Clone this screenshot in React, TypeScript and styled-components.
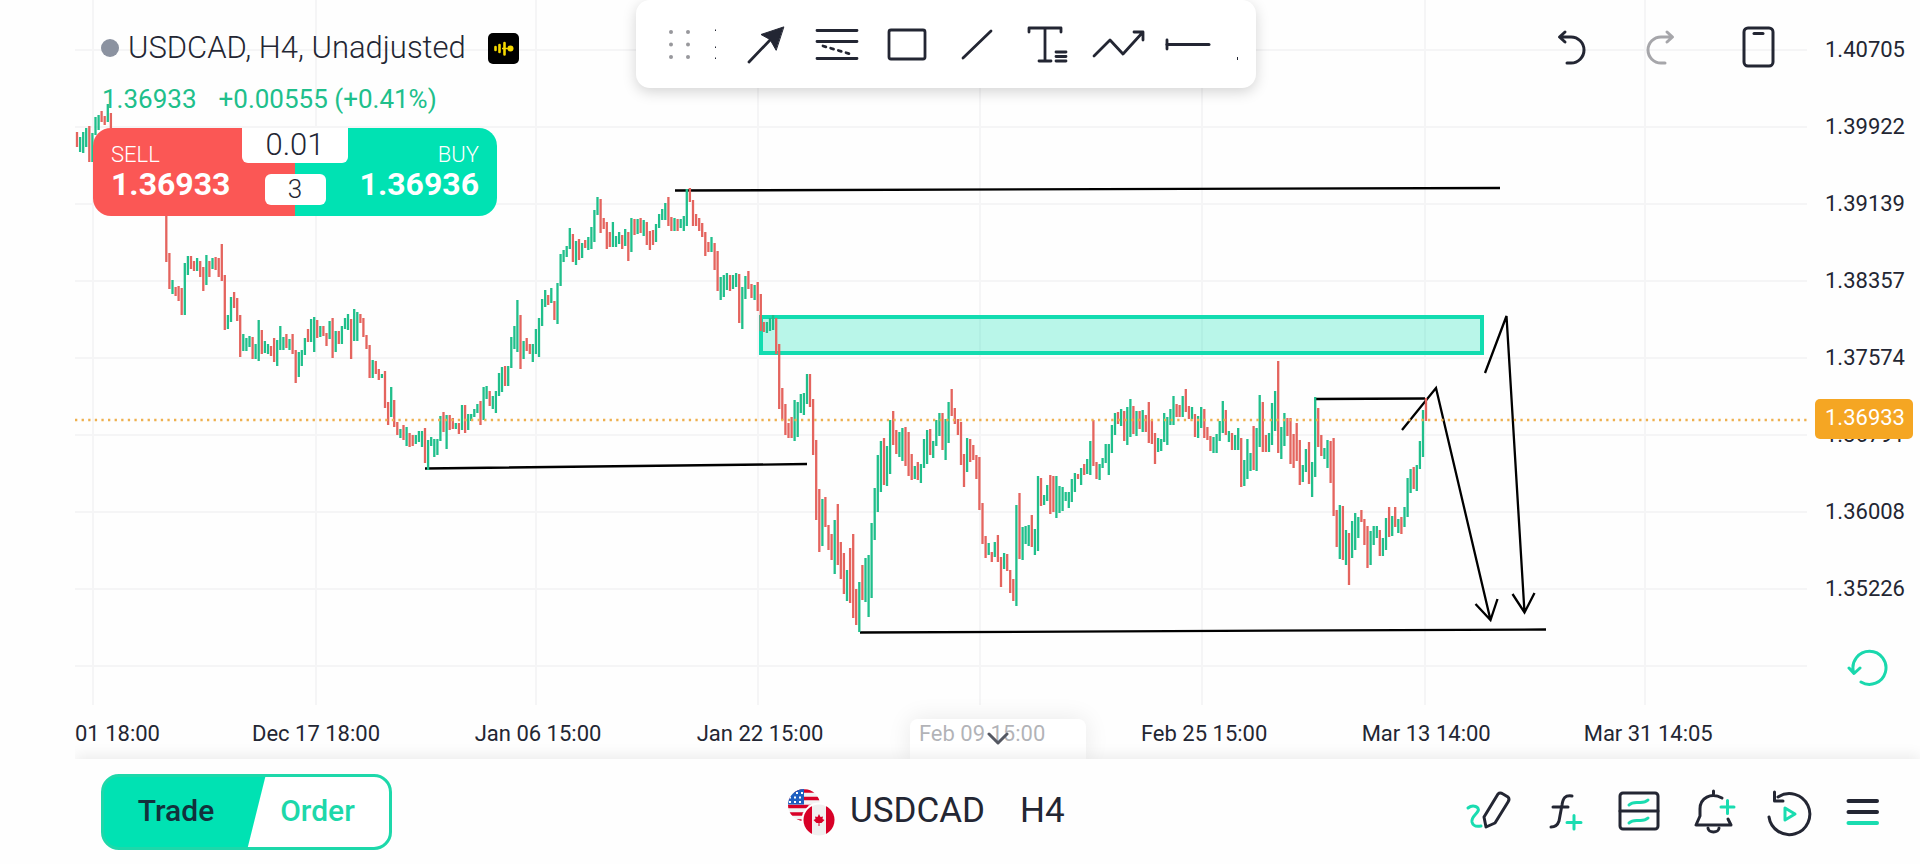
import React from "react";
import styled, { createGlobalStyle } from "styled-components";

const ink = "#232633";
const teal = "#00e2b3";
const up = "#20bf8b";
const down = "#e4645e";

const GlobalStyle = createGlobalStyle`
  *, *::before, *::after { box-sizing: border-box; }
  body { margin: 0; background: #fefefe; color: ${ink}; font-family: Roboto, "Liberation Sans", sans-serif; }
  button, input { font: inherit; color: inherit; border: 0; padding: 0; background: none; }
  button { cursor: pointer; }
  ul { list-style: none; margin: 0; padding: 0; }
`;

/* Each candle is a direction (u = up, d = down) with its top and bottom; "-" is a bar without data. */
const series = `
d132-147 u137-152 u132-153 u128-147 d126-162 u133-162 u117-135 u115-130 d111-122 d116-125 u104-122 d113-128
- - - - - - - - - - - - - - - - -
d205-262 d253-289 u280-294 d287-296 d286-301 d288-315 u263-315 u256-275 d256-269 d261-271
u258-271 d261-277 d267-291 u255-285 d261-277 u258-269 d257-270 d258-277 d244-281 d275-330
u315-329 u297-322 d292-308 d298-321 d315-357 u334-351 u338-351 u336-347 d337-359 u344-359
u320-361 d330-354 u341-353 u344-354 d346-356 d338-362 u340-366 u326-350 u337-350 d334-348
u339-350 d334-354 d350-383 u352-377 u350-366 u338-355 d329-342 u319-342 u317-352 d320-338
u326-337 d326-336 d333-346 u321-339 d318-358 u331-352 d331-344 u326-344 u318-329 u314-330
d319-359 u309-341 u312-341 d314-323 d318-337 d335-349 d345-378 u360-378 d361-374 d369-380
u374-378 d371-408 d402-425 u387-417 d400-427 d422-435 u429-438 d425-440 u427-446 d433-447
d435-446 u435-444 u431-442 u431-447 d428-463 u440-470 u437-446 u439-457 u439-455 u416-441
d412-432 u415-449 d415-430 d418-429 u423-429 d423-434 u405-430 d405-433 u414-430 u414-421
u409-417 u404-413 d401-425 u387-420 u386-399 d391-406 u396-409 u391-413 u373-396 u367-392
d366-386 u366-386 u337-368 u326-349 u300-352 d315-369 u341-359 d338-351 d344-354 u344-362
u329-354 u318-357 u299-326 u290-307 d295-305 u288-303 d301-320 u283-324 u254-286 u250-262
u246-257 u228-249 d234-262 u241-265 d239-260 u243-258 d240-248 u237-250 u227-249 u210-242
u197-215 d199-233 d218-229 d222-249 d232-247 u222-247 u236-247 u232-244 d235-249 u229-246
d232-261 u218-252 d219-235 u219-234 d218-233 u220-236 d222-245 d231-250 d230-245 u224-242
u214-228 u209-220 u203-220 d197-226 d217-231 u218-231 d219-231 u219-228 u216-231 u189-226
d188-202 d200-226 d214-226 d218-231 d223-237 d232-256 d242-252 u237-252 d243-270 d251-291
u277-300 u275-297 u273-290 d275-291 u275-289 u273-287 d274-323 u287-329 u276-299 d271-289
d284-298 u285-300 d282-311 d294-331 d322-332 u322-333 u318-331 u315-330 d318-354 d344-409
d388-420 d404-435 d423-438 d417-438 u400-441 u402-437 u394-413 u393-415 u374-404 d374-407
d399-455 d440-520 d489-552 u499-546 d497-527 d525-550 d534-560 u520-574 d504-565 d542-579
d553-594 u570-601 d548-603 d534-618 d589-625 u582-632 d565-600 u558-602 u555-617 u523-598
u488-540 u455-512 u441-492 d438-485 u446-486 u420-474 d411-445 d430-454 u432-457 u428-461
d427-466 d432-476 d454-480 u466-479 d462-480 u464-483 u439-468 u430-464 d429-455 u441-458
u420-446 u413-436 d413-450 u419-460 u402-443 d389-416 d408-424 d419-435 d422-465 d454-487
u438-472 d439-462 d445-460 d455-479 d457-510 d503-544 d536-558 u543-555 d552-562 u542-557
d535-562 d557-587 u553-569 d554-571 d570-593 d579-601 u505-606 d493-559 u527-560 u526-544
u525-546 d515-547 u529-555 u476-551 d478-506 u495-505 u485-501 d475-514 d476-512 u476-518
u486-513 u487-511 u492-501 u492-508 u479-502 u473-492 d474-479 u468-485 d464-475 u459-474
u441-475 d420-466 d462-479 u464-480 u458-468 u444-463 u444-475 u425-453 u413-435 d412-424
u409-426 d411-441 u407-445 u399-437 d406-434 u411-436 d411-429 u410-432 d415-432 d402-443
d420-444 d433-464 u438-452 u439-451 u413-442 u417-445 u409-425 u396-425 d404-417 d405-417
u396-417 d389-412 d406-419 u407-419 d414-437 u416-438 u407-428 d409-438 d427-440 d436-451
u437-453 u434-453 u421-441 u401-433 d410-435 u431-442 d433-450 u435-450 u428-450 d438-487
u460-486 u439-479 u453-471 d426-470 u428-471 u395-447 d402-452 d435-452 u433-452 u403-445
u391-431 d361-453 u427-459 u413-446 d418-436 d418-464 d434-468 d423-461 d440-485 u465-482
u449-472 d442-484 u462-497 u397-477 d408-447 d435-456 u448-459 u440-468 d441-483 d438-516
d510-547 u505-559 d506-560 u530-565 d533-585 u521-558 u513-550 u517-538 d510-522 d519-545
d526-568 u531-565 u526-545 u526-538 d530-556 u538-556 u518-550 d507-537 u516-536 d507-527
u519-533 d517-534 u507-527 u478-517 u469-493 d467-489 u465-491 u441-469 u410-457 d398-421
`.trim().split(/\s+/);

const BAR_STEP = 3.08;

const candlePath = (kind: string) =>
  series
    .map((bar, i) => {
      if (bar[0] !== kind) return "";
      const [top, bottom] = bar.slice(1).split("-");
      return `M${(2 + i * BAR_STEP).toFixed(1)} ${top}V${bottom}`;
    })
    .join("");

const gridX = [18, 241, 461, 683, 905, 1127, 1350, 1570];
const gridY = [50, 127, 204, 281, 358, 435, 512, 589, 666];
const prices = ["1.40705", "1.39922", "1.39139", "1.38357", "1.37574", "1.36791", "1.36008", "1.35226"];
const times = ["01 18:00", "Dec 17 18:00", "Jan 06 15:00", "Jan 22 15:00", "Feb 09 15:00", "Feb 25 15:00", "Mar 13 14:00", "Mar 31 14:05"];

const Screen = styled.div`
  height: 100vh;
  min-height: 560px;
  display: flex;
  flex-direction: column;
  overflow: hidden;
`;
const Stage = styled.main`
  position: relative;
  flex: 1;
  min-height: 0;
  display: grid;
  grid-template-columns: minmax(0, 1fr) 113px;
  grid-template-rows: minmax(0, 1fr) 54px;
  margin-left: 75px;
`;
const Plot = styled.svg`
  display: block;
  width: 100%;
  height: 100%;
`;
const PriceAxis = styled.aside`
  position: relative;
  display: grid;
`;
const PriceList = styled.ul`
  display: grid;
  grid-template-rows: 11fr repeat(9, 77fr) 1fr;
  &::before { content: ""; }
`;
const PriceLabel = styled.li`
  display: flex;
  align-items: center;
  padding-left: 18px;
  font-size: 22px;
  line-height: 24px;
`;
const ResetButton = styled.button`
  display: grid;
  place-items: center;
  width: 64px;
  height: 100%;
  margin-left: 30px;
`;
const ResetCell = styled.li`
  display: flex;
`;
const CurrentPrice = styled.output`
  position: absolute;
  top: 59.5%;
  left: 8px;
  width: 98px;
  height: 40px;
  transform: translateY(-50%);
  border-radius: 5px;
  background: #f5a623;
  color: #fff;
  font-size: 22px;
  line-height: 38px;
  padding-left: 10px;
`;
const TimeAxis = styled.ul`
  display: flex;
  padding-top: 16px;
  font-size: 22px;
  line-height: 26px;
  white-space: nowrap;
`;
const TimeLabel = styled.li`
  flex: 0 0 12.82%;
  text-align: center;
  &:first-child { flex-basis: 130px; text-align: left; }
`;
const CollapseTab = styled.button`
  position: absolute;
  left: 50%;
  bottom: 0;
  width: 176px;
  height: 40px;
  transform: translateX(-50%);
  display: grid;
  place-items: center;
  border-radius: 8px 8px 0 0;
  background: rgba(255, 255, 255, 0.65);
  box-shadow: 0 0 24px rgba(0, 0, 0, 0.09);
`;

const Overlay = styled.header`
  position: absolute;
  inset: 0 0 auto 0;
  display: grid;
  grid-template-columns: 561px 620px minmax(0, 1fr);
  align-items: start;
`;
const Summary = styled.section`
  padding: 28px 0 0 18px;
`;
const TitleRow = styled.div`
  display: flex;
  align-items: center;
  height: 40px;
  padding-left: 8px;
`;
const Dot = styled.span`
  width: 18px;
  height: 18px;
  border-radius: 50%;
  background: #8b92a0;
`;
const Title = styled.h1`
  margin: 0 22px 0 9px;
  font-size: 31px;
  line-height: 40px;
  font-weight: 300;
  white-space: nowrap;
`;
const Quote = styled.p`
  display: flex;
  gap: 22px;
  margin: 14px 0 0;
  padding-left: 9px;
  font-size: 26px;
  line-height: 34px;
  height: 46px;
  color: ${up};
`;
const Ticket = styled.div`
  position: relative;
  display: flex;
  width: 404px;
  height: 88px;
  border-radius: 18px;
  overflow: hidden;
  color: #fff;
`;
const Side = styled.button<{ $buy?: boolean }>`
  flex: 1;
  display: flex;
  flex-direction: column;
  justify-content: center;
  padding: 0 18px 2px;
  align-items: ${(p) => (p.$buy ? "flex-end" : "flex-start")};
  background: ${(p) => (p.$buy ? teal : "#fb5755")};
`;
const SideName = styled.span`
  font-size: 22px;
  line-height: 26px;
  font-weight: 300;
`;
const SidePrice = styled.strong`
  font-size: 32px;
  line-height: 32px;
  font-weight: 700;
`;
const TicketCenter = styled.div`
  position: absolute;
  inset: 0 149px;
  display: flex;
  flex-direction: column;
  align-items: center;
  gap: 11px;
  color: ${ink};
  font-weight: 300;
`;
const Volume = styled.input`
  width: 106px;
  height: 35px;
  border-radius: 0 0 6px 6px;
  background: #fff;
  text-align: center;
  font-size: 31px;
  line-height: 32px;
  padding-bottom: 2px;
`;
const Spread = styled.output`
  width: 61px;
  height: 31px;
  border-radius: 6px;
  background: #fff;
  text-align: center;
  font-size: 26px;
  line-height: 30px;
`;

const Toolbar = styled.div`
  display: flex;
  height: 88px;
  border-radius: 14px;
  background: #fff;
  box-shadow: 0 4px 14px rgba(0, 0, 0, 0.17);
`;
const Grip = styled.svg`
  flex: 0 0 95px;
`;
const Tool = styled.button`
  flex: 0 0 70px;
  height: 88px;
`;
const Actions = styled.div`
  display: flex;
  justify-content: flex-end;
  gap: 48px;
  padding: 24px 140px 0 0;
`;
const IconButton = styled.button`
  width: 44px;
  height: 48px;
`;
const Icon = styled.svg`
  display: block;
  fill: none;
  stroke: currentColor;
  stroke-width: 3;
  stroke-linecap: round;
  stroke-linejoin: round;
`;
const ToolIcon = styled(Icon)`
  stroke-width: 2.8;
`;

const BottomBar = styled.footer`
  position: relative;
  display: flex;
  align-items: center;
  height: 105px;
  margin-left: 75px;
  padding: 0 19px 0 26px;
  background: #fefefe;
  box-shadow: 0 -3px 14px rgba(0, 0, 0, 0.08);
  clip-path: inset(-24px 0 0 0);
`;
const Segments = styled.div`
  display: flex;
  width: 291px;
  height: 76px;
  border: 3px solid #1dd8aa;
  border-radius: 18px;
  overflow: hidden;
  font-size: 30px;
  font-weight: 500;
  background: linear-gradient(104deg, ${teal} 0 156px, #fff 157px);
`;
const Segment = styled.button<{ $active?: boolean }>`
  flex: ${(p) => (p.$active ? "0 0 144px" : "1")};
  text-align: center;
  padding: ${(p) => (p.$active ? "0 0 2px" : "0 2px 2px 0")};
  color: ${(p) => (p.$active ? "#12313c" : "#1dd8aa")};
`;
const Instrument = styled.div`
  display: flex;
  align-items: center;
  flex: 1;
  padding-left: 395px;
  font-size: 35px;
  line-height: 40px;
`;
const SymbolButton = styled.button`
  display: flex;
  align-items: center;
  gap: 13px;
`;
const SymbolName = styled.span`
  padding-bottom: 2px;
`;
const Period = styled.button`
  margin-left: 35px;
  padding-bottom: 2px;
`;
const Nav = styled.nav`
  display: flex;
`;
const NavButton = styled.button`
  width: 75px;
  height: 105px;
`;

const tools: [string, React.ReactNode][] = [
  ["Arrow", <><path d="M18 62 40 39" /><path d="M52.500 27 30 34.500 39 39.500 45 50Z" fill="currentColor" strokeWidth="1" /></>],
  ["Fibonacci", <><path d="M16 30.500H56M16 41.500H56M16 58.500H56" /><path d="M22 46 51 54.500" strokeDasharray="3 5" /></>],
  ["Rectangle", <rect x="18" y="30" width="36" height="29" rx="2" />],
  ["Trend line", <path d="M22 58 50 31" />],
  ["Text", <path d="M18 32V28H50V32M34 28V61M28 61H40M45 52H55M45 56.500H55M45 61H55" />],
  ["Path", <path d="M13 56 29 40 42 54 62 32M53 32H62V40" />],
  ["Horizontal ray", <><path d="M16 40V49" /><path d="M16 44.500H58" strokeWidth="3" /></>],
];

const navItems: [string, React.ReactNode][] = [
  ["Draw", <><path d="M17 49C22 45 29 48 27 52C25 56 20 58 21 63C22 67 25 68 30 67" stroke="#19dcb0" /><path d="M35 68 33 58 47 35Q49 33 52 35L57 38Q59 40 57 43L44 64Z" /></>],
  ["Indicators", <><path d="M46 37C39 36 37 39 36 46L33 62Q31 68 25 68M27 48H42" /><path d="M48 56.500V70M41 63.500H55" stroke="#19dcb0" /></>],
  ["Layout", <><rect x="19" y="34" width="38" height="36" rx="3" /><path d="M19 52H57" /><path d="M28 46C34 40 41 47 47 41M28 64C34 58 41 65 47 59" stroke="#19dcb0" /></>],
  ["Add alert", <><path d="M46 39C35 33 24 39 24 50V57L20 66H55L52 60M37.500 32V35" /><path d="M32 69A5.500 4 0 0 0 43 69" /><path d="M51.500 41.500V54.500M45 48H58" stroke="#19dcb0" /></>],
  ["Replay", <><path d="M27 38A20.500 20.500 0 1 1 18 58M23.500 33V42H32" /><path d="M34 49V61L44 55Z" stroke="#19dcb0" /></>],
  ["Menu", <><path d="M22.500 42H51M22.500 53H51" strokeWidth="4" /><path d="M22.500 64H51" stroke="#19dcb0" strokeWidth="4" /></>],
];

const BrokerLogo = () => (
  <svg width="31" height="31" viewBox="0 0 31 31" role="img" aria-label="Data source">
    <rect width="31" height="31" rx="5" fill="#000" />
    <path d="M7.500 14V17M11.500 12V19M16.500 10V21.500" stroke="#f5d800" strokeWidth="2.600" strokeLinecap="round" />
    <path d="M14 15.500H22" stroke="#f5d800" strokeWidth="1.500" />
    <circle cx="22.500" cy="15.500" r="3" fill="#f5d800" />
  </svg>
);

const Flags = () => (
  <svg width="50" height="48" viewBox="0 0 50 48" aria-hidden="true">
    <defs>
      <clipPath id="us"><circle cx="17" cy="17" r="16" /></clipPath>
      <clipPath id="ca"><circle cx="32" cy="32" r="15.500" /></clipPath>
    </defs>
    <g clipPath="url(#us)">
      <rect width="34" height="34" fill="#f2f2f2" />
      <path d="M0 3H34M0 10.500H34M0 18.500H34M0 26H34M0 33H34" stroke="#d80027" strokeWidth="3.700" />
      <rect width="17" height="16.500" fill="#1f5fc0" />
      <path d="M4 5H17M2 9.500H17M2 14H17" stroke="#fff" strokeWidth="2" strokeDasharray="2 3" />
    </g>
    <circle cx="32" cy="32" r="17.500" fill="#fff" />
    <g clipPath="url(#ca)">
      <rect x="16" y="16" width="32" height="32" fill="#f0f0f0" />
      <path d="M16 16H25V48H16ZM39 16H48V48H39Z" fill="#d80027" />
      <path d="M32 26 33.500 29 36 28.500 35.500 31 37.500 32 34.500 35H32.500V38H31.500V35H29.500L26.500 32 28.500 31 28 28.500 30.500 29Z" fill="#d80027" />
    </g>
  </svg>
);

const Chart = () => (
  <Plot viewBox="0 0 1732 705" preserveAspectRatio="none" role="img" aria-label="USDCAD four hour chart">
    <path d={gridX.map((x) => `M${x} 0V705`).join("") + gridY.map((y) => `M0 ${y}H1732`).join("")} stroke="#f5f5f6" strokeWidth="2" />
    <rect x="686" y="317" width="721" height="36" fill="#00e2b3" fillOpacity="0.27" stroke="#12dcb0" strokeWidth="4" />
    <g fill="none" stroke="#000" strokeWidth="2.300">
      <path d="M600 190.500 1425 188M350 468.500 732 464M785 632.500 1471 629.500M1240 399 1350 398.500" />
      <path d="M1327 430 1361 388 1415.500 620M1400.500 604 1415.500 620 1422.500 599" />
      <path d="M1410 373 1431.500 316 1449.500 612.500M1437.500 594 1449.500 612.500 1459.500 593" />
    </g>
    <path d={candlePath("u")} stroke={up} strokeWidth="2.300" />
    <path d={candlePath("d")} stroke={down} strokeWidth="2.300" />
    <path d="M0 420H1732" stroke="#eeb04e" strokeWidth="2.300" strokeDasharray="2.300 4.300" />
  </Plot>
);

export default function App() {
  return (
    <Screen>
      <GlobalStyle />
      <Stage>
        <Chart />
        <PriceAxis>
          <PriceList>
            {prices.map((p) => <PriceLabel key={p}>{p}</PriceLabel>)}
            <ResetCell>
              <ResetButton aria-label="Reset chart">
                <Icon width="44" height="44" viewBox="0 0 44 44" color="#19d8ad">
                  <path d="M14 38A16.500 16.500 0 1 0 6.500 28M2 24 7 29.500 13 24" />
                </Icon>
              </ResetButton>
            </ResetCell>
          </PriceList>
          <CurrentPrice>1.36933</CurrentPrice>
        </PriceAxis>
        <TimeAxis>
          {times.map((t) => <TimeLabel key={t}>{t}</TimeLabel>)}
        </TimeAxis>

        <Overlay>
          <Summary>
            <TitleRow>
              <Dot />
              <Title>USDCAD, H4, Unadjusted</Title>
              <BrokerLogo />
            </TitleRow>
            <Quote>
              <span>1.36933</span>
              <span>+0.00555 (+0.41%)</span>
            </Quote>
            <Ticket>
              <Side>
                <SideName>SELL</SideName>
                <SidePrice>1.36933</SidePrice>
              </Side>
              <Side $buy>
                <SideName>BUY</SideName>
                <SidePrice>1.36936</SidePrice>
              </Side>
              <TicketCenter>
                <Volume aria-label="Volume" defaultValue="0.01" />
                <Spread aria-label="Spread">3</Spread>
              </TicketCenter>
            </Ticket>
          </Summary>
          <Toolbar role="toolbar" aria-label="Drawing tools">
            <Grip width="95" height="88" viewBox="0 0 95 88" aria-hidden="true">
              {[32, 44.5, 57].map((y) => (
                <g key={y} fill="#98989c">
                  <circle cx="35" cy={y} r="2" />
                  <circle cx="52" cy={y} r="2" />
                </g>
              ))}
              <path d="M79.500 29.500V31M79.500 46.500V48M79.500 57.500V59" stroke={ink} />
            </Grip>
            {tools.map(([name, shape]) => (
              <Tool key={name} aria-label={name}>
                <ToolIcon width="70" height="88" viewBox="0 0 70 88">{shape}</ToolIcon>
              </Tool>
            ))}
            <svg width="20" height="88" viewBox="0 0 20 88" aria-hidden="true">
              <path d="M16.500 57V60" stroke={ink} />
            </svg>
          </Toolbar>
          <Actions>
            <IconButton aria-label="Undo">
              <Icon width="44" height="48" viewBox="0 0 44 48">
                <path d="M15 39H19A13 13 0 0 0 19 13H8M13 8 7.500 13 13 18" />
              </Icon>
            </IconButton>
            <IconButton aria-label="Redo" disabled>
              <Icon width="44" height="48" viewBox="0 0 44 48" color="#a6a6aa">
                <path d="M21 39H17A13 13 0 0 1 17 13H28M23 8 28.500 13 23 18" />
              </Icon>
            </IconButton>
            <IconButton aria-label="Portrait mode">
              <Icon width="44" height="48" viewBox="0 0 44 48">
                <rect x="8" y="4" width="29" height="38" rx="4" />
                <path d="M18 9.500H27" />
              </Icon>
            </IconButton>
          </Actions>
        </Overlay>

        <CollapseTab aria-label="Collapse panel">
          <Icon width="26" height="14" viewBox="0 0 26 14" color="#555862">
            <path d="M4 2 13 11 22 2" />
          </Icon>
        </CollapseTab>
      </Stage>

      <BottomBar>
        <Segments>
          <Segment $active>Trade</Segment>
          <Segment>Order</Segment>
        </Segments>
        <Instrument>
          <SymbolButton>
            <Flags />
            <SymbolName>USDCAD</SymbolName>
          </SymbolButton>
          <Period>H4</Period>
        </Instrument>
        <Nav aria-label="Chart tools">
          {navItems.map(([name, shape]) => (
            <NavButton key={name} aria-label={name}>
              <Icon width="75" height="105" viewBox="0 0 75 105">{shape}</Icon>
            </NavButton>
          ))}
        </Nav>
      </BottomBar>
    </Screen>
  );
}
